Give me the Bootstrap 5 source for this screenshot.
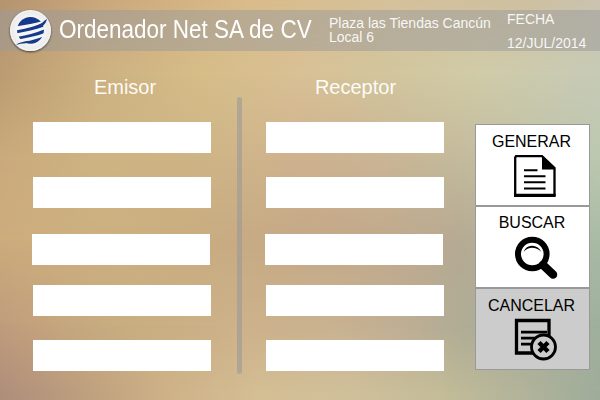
<!DOCTYPE html>
<html lang="es">
<head>
<meta charset="utf-8">
<meta name="viewport" content="width=device-width, initial-scale=1">
<title>Ordenador Net SA de CV</title>
<link href="https://cdn.jsdelivr.net/npm/bootstrap@5.3.0/dist/css/bootstrap.min.css" rel="stylesheet">
<style>
body{width:600px;height:400px;font-family:"Liberation Sans",Arial,sans-serif;background:#cbb088}
/* soft backdrop: colour bands that fade into each other downwards */
.band{position:absolute;inset:0;z-index:-1}
.band-1{background:linear-gradient(90deg,#b49470 0,#cba87c 100px,#dabc8a 250px,#d5c19c 400px,#cfc0a0 520px,#cbc3b0 600px)}
.band-2{background:linear-gradient(90deg,#bb9c72 0,#cdb181 100px,#d5bd88 200px,#d9c095 300px,#d2c59c 380px,#d0cba8 480px,#c6cab6 600px);-webkit-mask-image:linear-gradient(transparent 0,#000 75px)}
.band-3{background:linear-gradient(90deg,#caab7c 0,#ceb482 100px,#cdb485 200px,#cfb48a 250px,#ceb18f 300px,#cab494 380px,#c3ba9c 460px,#bbc8b0 600px);-webkit-mask-image:linear-gradient(transparent 75px,#000 160px)}
.band-4{background:linear-gradient(90deg,#ccac7c 0,#cdb080 100px,#c9ac80 200px,#c5a987 300px,#c2a98c 380px,#b6aa93 460px,#a9bba5 600px);-webkit-mask-image:linear-gradient(transparent 160px,#000 240px)}
.band-5{background:linear-gradient(90deg,#bf9c7c 0,#c5a67e 60px,#c8ae80 130px,#cdb18a 240px,#c9b290 330px,#bfae94 400px,#b0ac95 460px,#9fb09c 600px);-webkit-mask-image:linear-gradient(transparent 240px,#000 325px)}
.band-6{background:linear-gradient(90deg,#ae8d7b 0,#bd9e7e 80px,#cfb288 170px,#d4be94 260px,#cfc09a 350px,#c3bc98 440px,#b0b29a 530px,#9eac9a 600px);-webkit-mask-image:linear-gradient(transparent 325px,#000 395px)}
.topbar{height:41px;margin-top:10px;padding-left:9px;background:rgba(153,153,153,.5);color:#fff}
.logo{width:43px;height:45px;margin-top:-1px;overflow:visible}
.company{width:277px;padding-left:7px;font-size:22.5px;line-height:40px;white-space:nowrap}
.company span{display:inline-block;transform:scaleY(1.12)}
.address{width:178px;padding-top:6px;font-size:14px;line-height:14px;white-space:nowrap;color:rgba(255,255,255,.92)}
.today{font-size:14px;line-height:24px;margin-top:-3px;white-space:nowrap;color:rgba(255,255,255,.92)}
.form-side{width:178px}
.form-side h2{font-size:20px;font-weight:400;line-height:24px;color:rgba(255,255,255,.95);margin:0 0 23px;padding:24px 0 0 1px}
.form-side h2.emisor{padding-left:6px}
.entry{height:31px;border:0;border-radius:0;padding:0 6px;background:#fff}
.entries{display:grid;grid-template-rows:55px 57px 51px 55px 31px}
.entries .entry:nth-child(3){margin-left:-1px}
.divider{width:5px;height:277px;margin:46px 24px 0 26px;border-radius:2.5px;background:rgba(153,153,153,.6)}
.actions{width:115px;margin:73px 10px 0 31px}
.action{height:82px;border:1px solid #999;border-radius:0;background:#fff;color:#000;font-size:16px;line-height:18px;padding:8px 2px 7px 0}
.action.search{padding:7px 1px 8px 0}
.action:hover{background:#fff;color:#000}
.action.muted,.action.muted:hover{background:#ccc}
.action svg{display:block;width:44px;height:44px;margin:3px 0 0 36px;overflow:visible}
</style>
</head>
<body class="position-relative overflow-hidden">
<div class="band band-1"></div><div class="band band-2"></div><div class="band band-3"></div>
<div class="band band-4"></div><div class="band band-5"></div><div class="band band-6"></div>

<div class="overflow-hidden">
<header class="topbar d-flex align-items-start">
  <svg class="logo flex-shrink-0" viewBox="0 0 43 45">
    <defs>
      <radialGradient id="disc"><stop offset=".65" stop-color="#f5f5f6"/><stop offset=".9" stop-color="#ececec"/><stop offset="1" stop-color="#fafafa"/></radialGradient>
      <filter id="shade" x="-20%" y="-20%" width="140%" height="140%"><feDropShadow dx="0" dy="1" stdDeviation="1" flood-color="#000" flood-opacity=".65"/></filter>
      <clipPath id="globe"><circle cx="21.5" cy="21.3" r="13.4"/></clipPath>
    </defs>
    <circle cx="21.5" cy="21.5" r="20.5" fill="url(#disc)" filter="url(#shade)"/>
    <g clip-path="url(#globe)" fill="#17398a">
      <path d="M7 17.500V6h29v5.500Q24 15 7 17.500Z"/>
      <path d="M7 21.500Q24 18.500 36 13v4.200Q24 21.700 7 24.300Z"/>
      <path d="M7 28.200Q24 25.300 36 20v4Q24 28.300 7 31Z"/>
      <path d="M7 34.300Q24 32 36 26.800v10H7Z"/>
    </g>
    <path d="M26 17.300Q32 15.500 35 12L38 10Q37 14.500 33 17.500L27 19.500Z" fill="#17398a"/>
    <path d="M7 36Q10 33 20 31.800L17 34.200Q11 34.400 7 36Z" fill="#17398a"/>
  </svg>
  <div class="company"><span>Ordenador Net SA de CV</span></div>
  <div class="address">Plaza las Tiendas Cancún<br>Local 6</div>
  <div class="today">FECHA<br>12/JUL/2014</div>
</header>

<main class="d-flex align-items-start">
  <section class="form-side ms-auto">
    <h2 class="emisor text-center">Emisor</h2>
    <div class="entries">
      <input class="form-control entry" aria-label="Emisor 1"><input class="form-control entry" aria-label="Emisor 2">
      <input class="form-control entry" aria-label="Emisor 3"><input class="form-control entry" aria-label="Emisor 4">
      <input class="form-control entry" aria-label="Emisor 5">
    </div>
  </section>
  <div class="divider"></div>
  <section class="form-side">
    <h2 class="text-center">Receptor</h2>
    <div class="entries">
      <input class="form-control entry" aria-label="Receptor 1"><input class="form-control entry" aria-label="Receptor 2">
      <input class="form-control entry" aria-label="Receptor 3"><input class="form-control entry" aria-label="Receptor 4">
      <input class="form-control entry" aria-label="Receptor 5">
    </div>
  </section>
  <nav class="actions d-flex flex-column">
    <button class="btn action">GENERAR
      <svg viewBox="0 0 44 44"><path d="M4 2.200H30L42.500 14V41H3.200V3.500Z" fill="#fff" stroke="#000" stroke-width="2.300"/><path d="M30 1.500L43.500 15.500H30ZM2 40h41.600v3H2Z"/><path d="M12 16.300H25.500M12 22.300H33.500M12 28.300H33.500M12 34.500H33.500" stroke="#000" stroke-width="1.900"/></svg>
    </button>
    <button class="btn action search">BUSCAR
      <svg viewBox="0 0 44 44"><circle cx="20.300" cy="19" r="14.300" fill="none" stroke="#000" stroke-width="6"/><path d="M31 30L41 39.500" stroke="#000" stroke-width="8.500" stroke-linecap="round"/><path d="M11.500 17Q14 10.700 20 10.700Q26 10.700 29.500 17Q25 12.800 20 12.800Q15.500 12.800 11.500 17Z"/></svg>
    </button>
    <button class="btn action muted">CANCELAR
      <svg viewBox="0 0 44 44"><path d="M4.500 2.500H37V35H4.500Z" fill="none" stroke="#000" stroke-width="3.300"/><path d="M9 14.200H35M9 20.200H24M9 26.200H20" stroke="#000" stroke-width="2.800"/><circle cx="31.500" cy="29" r="12" fill="#ccc" stroke="#000" stroke-width="2.800"/><path d="M27 24.500L36 33.500M36 24.500L27 33.500" stroke="#000" stroke-width="4.500"/></svg>
    </button>
  </nav>
</main>
</div>
</body>
</html>
